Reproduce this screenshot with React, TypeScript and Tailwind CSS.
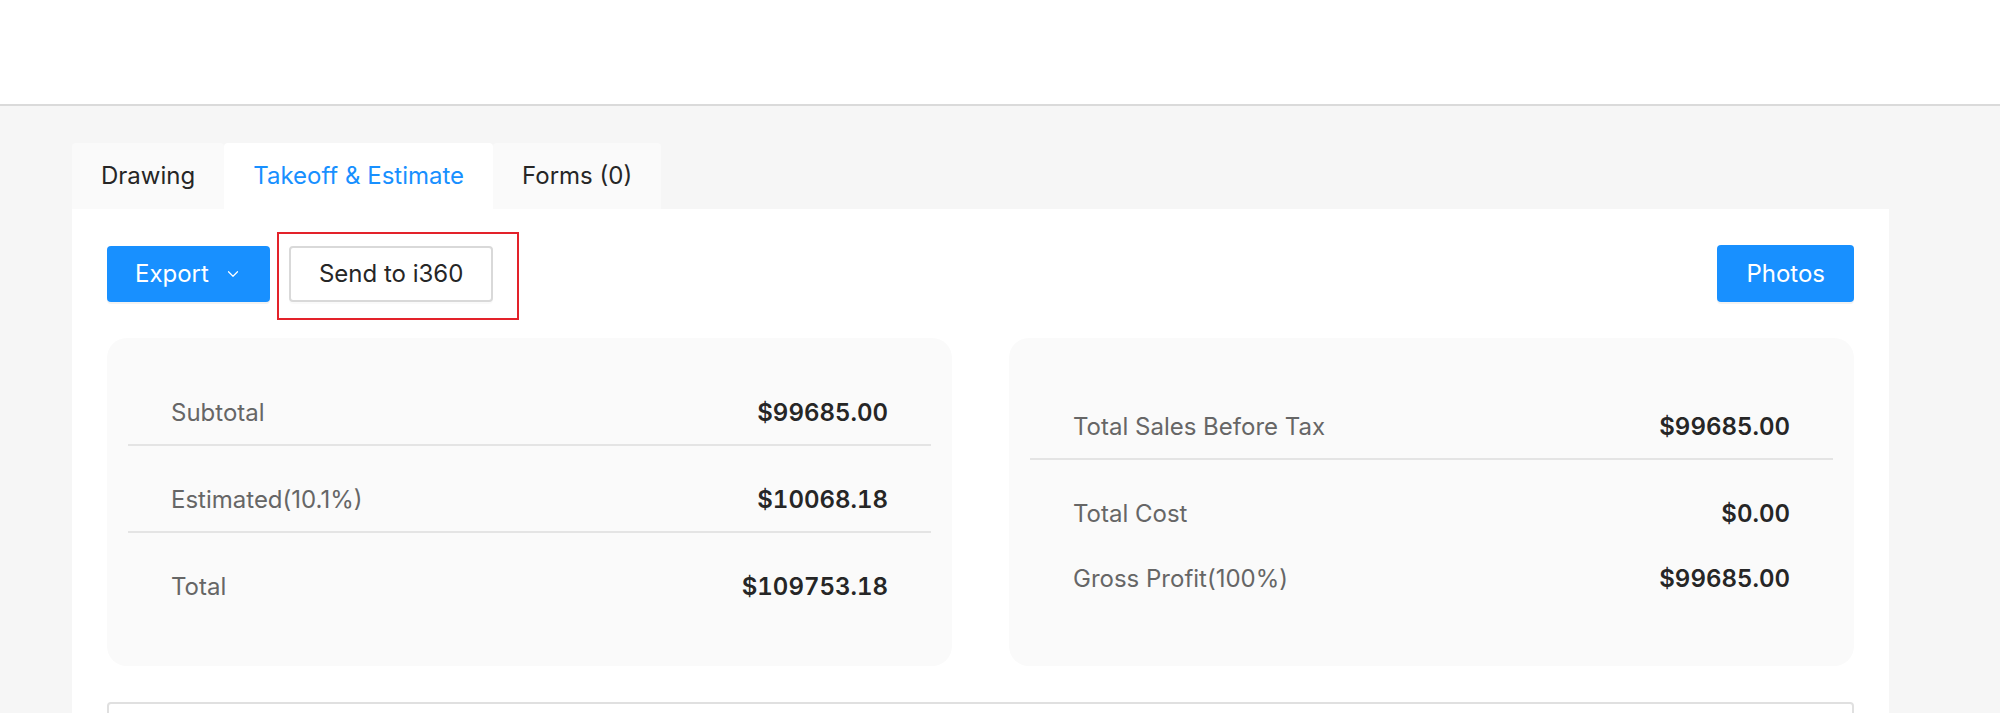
import { ChevronDown } from "lucide-react";

const TABS = ["Drawing", "Takeoff & Estimate", "Forms (0)"];

function Row({ label, value }: { label: string; value: string }) {
  return (
    <div className="flex items-center justify-between px-[43px] leading-[32px]">
      <span className="text-[#666666]">{label}</span>
      <span className="font-semibold tabular-nums text-[#262626]">{value}</span>
    </div>
  );
}

export default function App() {
  const active = 1;

  return (
    <div className="min-h-screen bg-[#f6f6f6] font-['Inter',sans-serif] text-[24px]">
      <header className="h-[106px] bg-white border-b-2 border-[#dadada]" />

      <div className="pl-[72px] pr-[111px] pt-[37px]">
        {/* tabs */}
        <div className="flex h-[66px]">
          {TABS.map((t, i) => (
            <div
              key={t}
              className={
                i === active
                  ? "flex items-center px-[29px] bg-white text-[#1890ff] rounded-t-[4px]"
                  : "flex items-center px-[29px] bg-[#fafafa] text-[#262626] rounded-t-[4px]"
              }
            >
              {t}
            </div>
          ))}
        </div>

        <div className="bg-white px-[35px] pt-[36px] pb-[10px]">
          {/* toolbar */}
          <div className="flex items-center justify-between">
            <div className="flex items-center">
              <button className="flex items-center gap-[15px] h-[56px] px-[28px] rounded-[4px] bg-[#1890ff] text-white shadow-[0_2px_0_rgba(0,0,0,0.05)]">
                Export
                <ChevronDown className="w-[18px] h-[18px]" strokeWidth={1.6} />
              </button>
              <div className="relative ml-[19px]">
                <button className="h-[56px] px-[28px] rounded-[4px] bg-white border-2 border-[#d9d9d9] text-[#262626] shadow-[0_2px_0_rgba(0,0,0,0.02)]">
                  Send to i360
                </button>
                <div className="absolute -left-[12px] -top-[14px] -right-[26px] -bottom-[18px] border-2 border-[#e3222a] pointer-events-none" />
              </div>
            </div>
            <button className="h-[57px] px-[29px] rounded-[4px] bg-[#1890ff] text-white shadow-[0_2px_0_rgba(0,0,0,0.05)]">
              Photos
            </button>
          </div>

          {/* summary cards */}
          <div className="grid grid-cols-2 gap-[57px] mt-[36px]">
            <div className="h-[328px] rounded-[20px] bg-[#fafafa] px-[21px] pt-[59px]">
              <Row label="Subtotal" value="$99685.00" />
              <div className="mt-[15px] h-[2px] bg-[#e4e4e4]" />
              <div className="mt-[38px]">
                <Row label="Estimated(10.1%)" value="$10068.18" />
              </div>
              <div className="mt-[15px] h-[2px] bg-[#e4e4e4]" />
              <div className="mt-[38px]">
                <Row label="Total" value="$109753.18" />
              </div>
            </div>

            <div className="h-[328px] rounded-[20px] bg-[#fafafa] px-[21px] pt-[73px]">
              <Row label="Total Sales Before Tax" value="$99685.00" />
              <div className="mt-[15px] h-[2px] bg-[#e4e4e4]" />
              <div className="mt-[38px]">
                <Row label="Total Cost" value="$0.00" />
              </div>
              <div className="mt-[33px]">
                <Row label="Gross Profit(100%)" value="$99685.00" />
              </div>
            </div>
          </div>

          <div className="mt-[36px] h-[80px] border-2 border-[#e0e0e0] rounded-t-[4px]" />
        </div>
      </div>
    </div>
  );
}
